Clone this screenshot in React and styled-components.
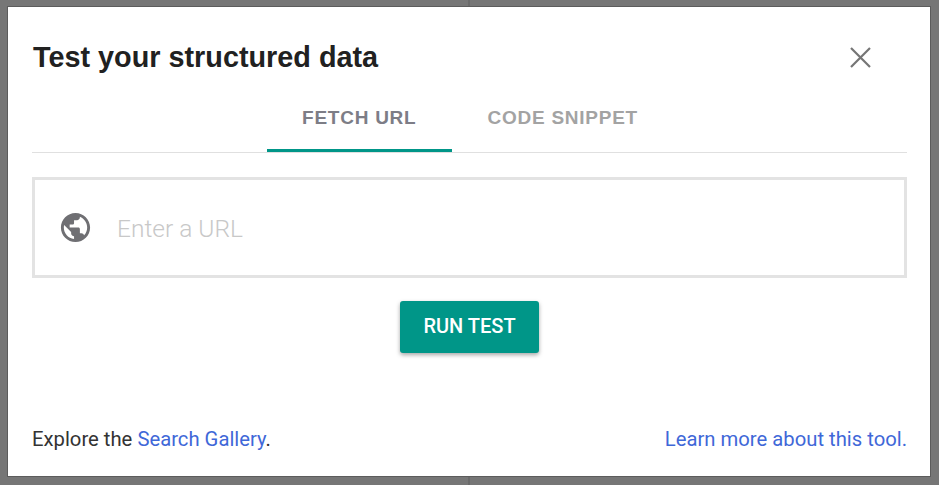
import React from "react";
import styled, { createGlobalStyle } from "styled-components";

const GlobalStyle = createGlobalStyle`
	html, body {
		margin: 0;
		height: 100%;
		background: #767676;
	}
	#root {
		height: 100%;
	}
`;

const Backdrop = styled.div`
	position: relative;
	box-sizing: border-box;
	width: 939px;
	height: 485px;
	padding: 7px 9px 9px 8px;
	background: #767676;
	overflow: hidden;
	&:before {
		content: "";
		position: absolute;
		top: 0;
		left: 468px;
		width: 2px;
		height: 100%;
		background: #6a6a6a;
	}
`;

const Dialog = styled.div`
	position: relative;
	display: flex;
	flex-direction: column;
	box-sizing: border-box;
	height: 469px;
	padding: 0 23px 0 24px;
	background: #fff;
	box-shadow: 0 0 0 1px #5c5c5c;
`;

const Header = styled.div`
	display: flex;
	align-items: center;
	justify-content: space-between;
	height: 50px;
	padding: 0 36px 0 1px;
	margin-top: 25px;
	box-sizing: border-box;
`;

const Title = styled.h1`
	margin: 0;
	font: bold 28.8px/1 "Liberation Sans", Arial, sans-serif;
	color: #212121;
`;

const CloseButton = styled.button`
	display: flex;
	padding: 0;
	border: 0;
	background: none;
	color: #757575;
`;

const Tabs = styled.div`
	display: flex;
	justify-content: center;
	height: 70px;
	padding-left: 1px;
	border-bottom: 1px solid #e0e0e0;
`;

const Tab = styled.div`
	display: flex;
	align-items: center;
	box-sizing: border-box;
	height: 70px;
	padding: 3px 35.5px 0;
	font: bold 19px/1 "Liberation Sans", Arial, sans-serif;
	letter-spacing: 0.75px;
	color: ${p => (p.$active ? "#7d7d86" : "#a3a3a3")};
	border-bottom: 3px solid ${p => (p.$active ? "#009688" : "transparent")};
`;

const UrlBox = styled.div`
	display: flex;
	align-items: center;
	gap: 27px;
	box-sizing: border-box;
	height: 101px;
	margin-top: 24px;
	padding-left: 26px;
	border: 3px solid #e3e3e3;
`;

const GlobeSvg = styled.svg`
	width: 35px;
	height: 35px;
	margin: 0 -3px;
	fill: #6f6f73;
`;

const UrlInput = styled.input`
	flex: 1;
	border: 0;
	outline: 0;
	padding: 2px 0 0;
	background: none;
	font: 300 24.5px "Roboto", sans-serif;
	color: #333;
	&::placeholder {
		color: #c8c8c8;
		opacity: 1;
	}
`;

const Actions = styled.div`
	display: flex;
	justify-content: center;
	margin-top: 23px;
`;

const RunButton = styled.button`
	width: 139px;
	height: 52px;
	padding: 0 0 3px;
	border: 0;
	border-radius: 3px;
	background: #009688;
	color: #fff;
	font: 500 20px/1 "Roboto", sans-serif;
	box-shadow: 0 2px 4px rgba(0, 0, 0, 0.35);
`;

const Footer = styled.div`
	display: flex;
	justify-content: space-between;
	margin-top: auto;
	margin-bottom: 26px;
	font: 400 20.25px/22px "Roboto", sans-serif;
	color: #333;
`;

const Link = styled.a`
	color: #3f68d8;
	text-decoration: none;
`;

const GlobeIcon = () => (
	<GlobeSvg viewBox="0 0 24 24">
		<path d="M12 2C6.48 2 2 6.48 2 12s4.48 10 10 10 10-4.48 10-10S17.52 2 12 2zm-1 17.93c-3.95-.49-7-3.85-7-7.93 0-.62.08-1.21.21-1.79L9 15v1c0 1.1.9 2 2 2v1.93zm6.9-2.54c-.26-.81-1-1.39-1.9-1.39h-1v-3c0-.55-.45-1-1-1H8v-2h2c.55 0 1-.45 1-1V7h2c1.1 0 2-.9 2-2v-.41c2.93 1.19 5 4.06 5 7.41 0 2.08-.8 3.97-2.1 5.39z" />
	</GlobeSvg>
);

const CloseIcon = () => (
	<svg width="21" height="21" viewBox="0 0 21 21" fill="none" stroke="currentColor" strokeWidth="2.2">
		<path d="M1 1 L20 20 M20 1 L1 20" />
	</svg>
);

const App = () => (
	<>
		<GlobalStyle />
		<Backdrop>
			<Dialog>
				<Header>
					<Title>Test your structured data</Title>
					<CloseButton aria-label="Close"><CloseIcon /></CloseButton>
				</Header>
				<Tabs>
					<Tab $active>FETCH URL</Tab>
					<Tab>CODE SNIPPET</Tab>
				</Tabs>
				<UrlBox>
					<GlobeIcon />
					<UrlInput placeholder="Enter a URL" />
				</UrlBox>
				<Actions>
					<RunButton>RUN TEST</RunButton>
				</Actions>
				<Footer>
					<span>Explore the <Link href="#">Search Gallery</Link>.</span>
					<Link href="#">Learn more about this tool.</Link>
				</Footer>
			</Dialog>
		</Backdrop>
	</>
);

export default App;
